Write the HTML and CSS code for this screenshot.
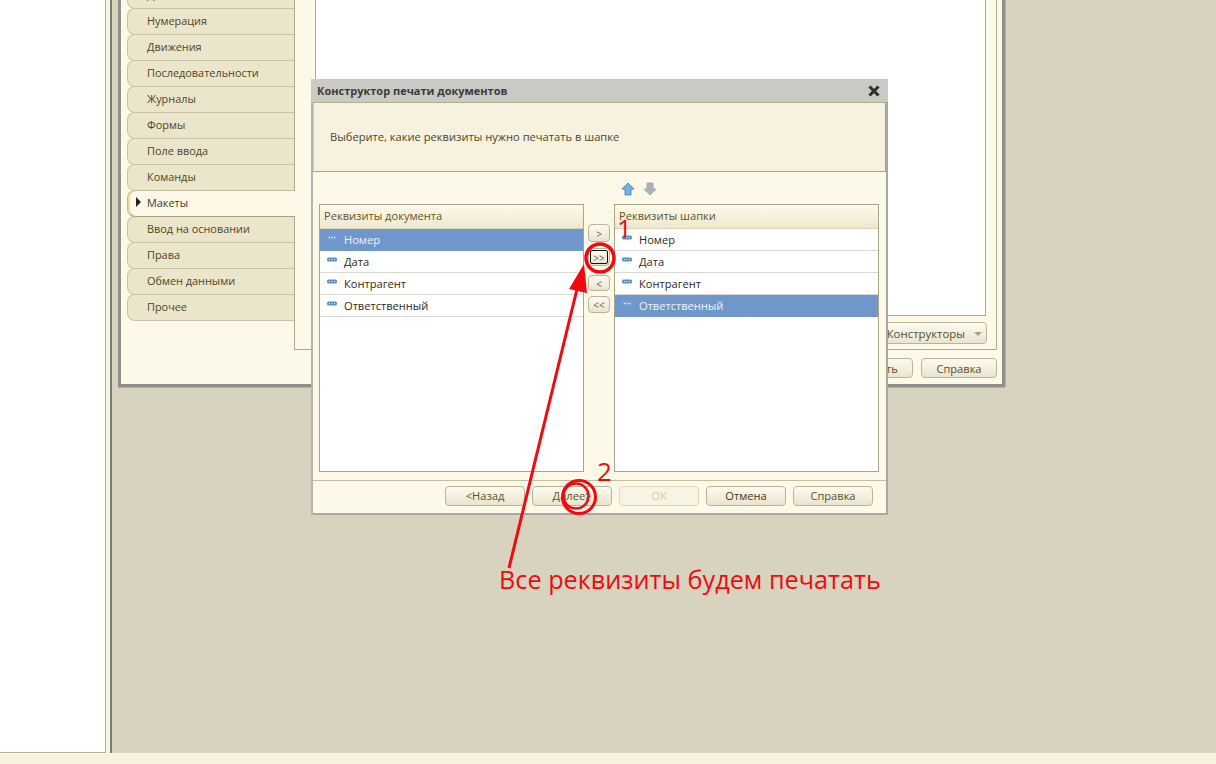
FILE: index.html
```html
<!DOCTYPE html>
<html lang="ru">
<head>
<meta charset="utf-8">
<title>Конструктор печати документов</title>
<link rel="stylesheet" href="styles.css">
</head>
<body>
<svg width="0" height="0" class="defs">
  <symbol id="attr" viewBox="0 0 10 5">
    <rect x="0" y="0.5" width="10" height="4" rx="1.5" fill="#5c90bd"/>
    <path d="M2 2.5h1M4.5 2.5h1M7 2.5h1" stroke="#e8f0f6" stroke-width="1"/>
  </symbol>
  <symbol id="attr-sel" viewBox="0 0 10 5">
    <rect x="0" y="0.5" width="10" height="4" rx="1.5" fill="#7fa3d2"/>
    <path d="M2 2.5h1M4.5 2.5h1M7 2.5h1" stroke="#fff" stroke-width="1"/>
  </symbol>
</svg>
<div class="desktop">
  <aside class="side"></aside>
  <div class="gutter"></div>
  <main class="work"></main>
</div>
<div class="statusbar"></div>

<section class="window">
  <div class="tabs">
    <div class="tab">Данные</div>
    <div class="tab">Нумерация</div>
    <div class="tab">Движения</div>
    <div class="tab">Последовательности</div>
    <div class="tab">Журналы</div>
    <div class="tab">Формы</div>
    <div class="tab">Поле ввода</div>
    <div class="tab">Команды</div>
    <div class="tab tab-active"><span class="tab-mark"></span>Макеты</div>
    <div class="tab">Ввод на основании</div>
    <div class="tab">Права</div>
    <div class="tab">Обмен данными</div>
    <div class="tab">Прочее</div>
  </div>
  <div class="panel-col">
    <div class="panel">
      <div class="panel-white"></div>
      <div class="panel-tools"><div class="btn btn-ctor">Конструкторы<span class="caret"></span></div></div>
    </div>
    <div class="win-foot"><div class="btn btn-main">Закрыть</div><div class="btn btn-main">Справка</div></div>
  </div>
</section>

<section class="dialog">
  <header class="dlg-title">
    <span>Конструктор печати документов</span>
    <svg class="dlg-close" width="14" height="14" viewBox="0 0 14 14"><path d="M2.5 2.5l9 9M11.5 2.5l-9 9" stroke="#2e2e2e" stroke-width="3"/></svg>
  </header>
  <div class="dlg-intro">Выберите, какие реквизиты нужно печатать в шапке</div>
  <div class="dlg-body">
    <div class="order">
      <svg width="14" height="14" viewBox="0 0 14 14"><path d="M7 1L13 7H10V13H4V7H1Z" fill="#6fb4e6" stroke="#5f88a8"/></svg>
      <svg width="14" height="14" viewBox="0 0 14 14"><path d="M7 13L13 7H10V1H4V7H1Z" fill="#a9b2b6" stroke="#a2aaae"/></svg>
    </div>
    <div class="columns">
      <div class="list">
        <div class="list-head">Реквизиты документа</div>
        <div class="row row-sel"><svg class="ico"><use href="#attr-sel"/></svg>Номер</div>
        <div class="row"><svg class="ico"><use href="#attr"/></svg>Дата</div>
        <div class="row"><svg class="ico"><use href="#attr"/></svg>Контрагент</div>
        <div class="row"><svg class="ico"><use href="#attr"/></svg>Ответственный</div>
      </div>
      <div class="movers">
        <div class="btn btn-move">&gt;</div>
        <div class="btn btn-move btn-focus">&gt;&gt;</div>
        <div class="btn btn-move btn-third">&lt;</div>
        <div class="btn btn-move btn-fourth">&lt;&lt;</div>
      </div>
      <div class="list">
        <div class="list-head">Реквизиты шапки</div>
        <div class="row"><svg class="ico"><use href="#attr"/></svg>Номер</div>
        <div class="row"><svg class="ico"><use href="#attr"/></svg>Дата</div>
        <div class="row"><svg class="ico"><use href="#attr"/></svg>Контрагент</div>
        <div class="row row-sel"><svg class="ico"><use href="#attr-sel"/></svg>Ответственный</div>
      </div>
    </div>
  </div>
  <footer class="dlg-foot">
    <div class="btn btn-foot">&lt;Назад</div>
    <div class="btn btn-foot">Далее&gt;</div>
    <div class="btn btn-foot btn-off">OK</div>
    <div class="btn btn-foot btn-dark">Отмена</div>
    <div class="btn btn-foot">Справка</div>
  </footer>
</section>

<svg class="marks" width="1216" height="764" viewBox="0 0 1216 764">
  <g fill="none" stroke="#f00a10">
    <circle cx="600" cy="258" r="14" stroke-width="3.5"/>
    <circle cx="579" cy="497" r="16.5" stroke-width="3" />
    <circle cx="576" cy="496" r="12.5" stroke-width="2.5"/>
    <path d="M509 568L578 285" stroke-width="3"/>
  </g>
  <path d="M584 264L587 293L569 289Z" fill="#f00a10"/>
</svg>
<div class="note note-1">1</div>
<div class="note note-2">2</div>
<div class="note note-text">Все реквизиты будем печатать</div>
</body>
</html>
```
FILE: styles.css
```css
* { box-sizing: border-box; }
html, body { margin: 0; height: 100%; }
body {
  width: 1216px; height: 764px; overflow: hidden; position: relative;
  font: 11.1px "Open Sans", "Noto Sans", sans-serif; color: #4a3f1e;
  background: #f5f3e0;
}
.defs { position: absolute; }
.desktop { display: flex; height: 753px; }
.side { width: 106px; background: #fff; border-right: 1px solid #b5b08f; border-bottom: 1px solid #b5b08f; }
.gutter { width: 4px; background: #f8f5e2; }
.work { flex: 1; background: #d8d3be; border-left: 2px solid #7d7b6c; }
.statusbar { height: 11px; background: #f5f3e0; border-top: 1px solid #fbfaf0; }

.window {
  position: absolute; left: 118px; top: -30px; width: 887px; height: 417px;
  display: flex; padding: 0 5px 2px 6px;
  background: #fdf9e9;
  border: solid #8f8f8c; border-width: 0 3px 3px 3px;
  box-shadow: 0 1px 0 #b5b29f, 1px 0 0 #b5b29f, inset 1px 0 0 #fff;
}
.tabs { width: 167px; flex: none; padding-top: 12px; }
.tab {
  height: 27px; line-height: 24px; margin-bottom: -1px; padding-left: 19px; color: #4f4622; font-size: 10.9px;
  background: #ebe5cb; border: 1px solid #c9c3a4; border-right: 0;
  border-radius: 8px 0 0 8px; white-space: nowrap;
}
.tab-active {
  position: relative; background: #fdf9e9; color: #3f3818;
  box-shadow: inset 2px 0 0 #f0d9a0; border-color: #c0ba98 #c0ba98 #a8a27f;
  margin-right: -1px; z-index: 1;
}
.tab-mark {
  position: absolute; left: 8px; top: 6px; width: 0; height: 0;
  border-left: 5px solid #222; border-top: 5px solid transparent; border-bottom: 5px solid transparent;
}
.panel-col { flex: 1; display: flex; flex-direction: column; }
.panel { height: 380px; border: 1px solid #b0aa88; border-top: 0; padding: 0 10px 0 20px; display: flex; flex-direction: column; }
.panel-white { height: 346px; background: #fff; border: 1px solid #b0aa88; border-top: 0; }
.panel-tools { display: flex; justify-content: flex-end; padding-top: 6px; margin-right: -1px; }
.win-foot { display: flex; justify-content: flex-end; gap: 8px; padding-top: 8px; }

.btn {
  display: flex; align-items: center; justify-content: center;
  border: 1px solid #b9b496; border-radius: 4px; color: #5a5128;
  background: linear-gradient(#fdfbf0, #e9e4cf);
}
.btn-ctor { width: 120px; height: 22px; justify-content: flex-end; padding-right: 4px; gap: 9px; font-size: 11.4px; }
.caret { width: 0; height: 0; border-left: 4px solid transparent; border-right: 4px solid transparent; border-top: 4px solid #a8a27f; margin-top: 1px; }
.btn-main { width: 76px; height: 20px; }

.dialog {
  position: absolute; left: 311px; top: 79px; width: 577px; height: 436px;
  display: flex; flex-direction: column; background: #fdf9e9;
  border: 1px solid #c9c9c6; border-width: 1px 0 0 0;
  box-shadow: inset -2px 0 0 #a9a9a4, inset 2px 0 0 #b5b5b0, inset 0 -2px 0 #a9a9a4;
  padding: 0 2px 2px 2px;
}
.dlg-title {
  flex: none; height: 22px; margin: 0 -2px; padding: 0 8px 2px 6px; background: #c9c9c6;
  display: flex; align-items: center; justify-content: space-between;
  font-weight: 700; font-size: 11px; color: #3a3a3a;
}
.dlg-close { margin-right: -1px; margin-top: 2px; }
.dlg-intro {
  flex: none; height: 70px; padding: 0 0 2px 16px; display: flex; align-items: center;
  background: #f6f2df; color: #4f4622; font-size: 11.15px;
  border-top: 1px solid #b5b091; border-bottom: 1px solid #aaa586; border-left: 1px solid #cfcab0; border-right: 1px solid #aaa586;
}
.dlg-body { flex: 1; display: flex; flex-direction: column; padding: 9px 6px 8px 6px; }
.order { display: flex; justify-content: center; gap: 8px; height: 23px; padding-left: 78px; padding-top: 1px; }
.columns { flex: 1; display: flex; }
.list { width: 265px; background: #fff; border: 1px solid #aaa586; }
.list-head { height: 24px; line-height: 22px; padding-left: 4px; color: #5f5528; background: linear-gradient(#fdf9e9, #efe8cf); border-bottom: 1px solid #d8d2b6; }
.row { height: 22px; display: flex; align-items: center; padding-left: 7px; color: #2d2a18; border-bottom: 1px solid #d9d9d2; }
.row-sel { background: #6f97cc; color: #eef3fa; border-bottom-color: #6f97cc; }
.ico { width: 10px; height: 5px; margin-right: 7px; margin-top: -5px; flex: none; }
.movers { width: 30px; display: flex; flex-direction: column; align-items: center; gap: 6px; padding-top: 20px; }
.btn-move { width: 22px; height: 18px; font-size: 10px; color: #6a6240; padding-top: 1px; }
.btn-third { height: 16px; margin-top: 3px; }
.btn-fourth { height: 17px; margin-top: -1px; }
.btn-focus { outline: 1px solid #111; outline-offset: -3px; }
.dlg-foot { flex: none; height: 33px; display: flex; justify-content: flex-end; gap: 7px; padding: 5px 13px 0 0; border-top: 1px solid #c4bf9f; }
.btn-foot { width: 80px; height: 20px; padding-bottom: 2px; }
.btn-off { color: #d5cfb3; border-color: #dbd6bd; background: #f8f4e3; }
.btn-dark { color: #3f3818; }

.marks { position: absolute; left: 0; top: 0; pointer-events: none; }
.note { position: absolute; color: #f00a10; font-family: "Open Sans", sans-serif; line-height: 1; white-space: nowrap; }
.note-1 { left: 617px; top: 215px; font-size: 26px; }
.note-2 { left: 597px; top: 458px; font-size: 26px; }
.note-text { left: 499px; top: 567px; font-size: 25.25px; }
```
